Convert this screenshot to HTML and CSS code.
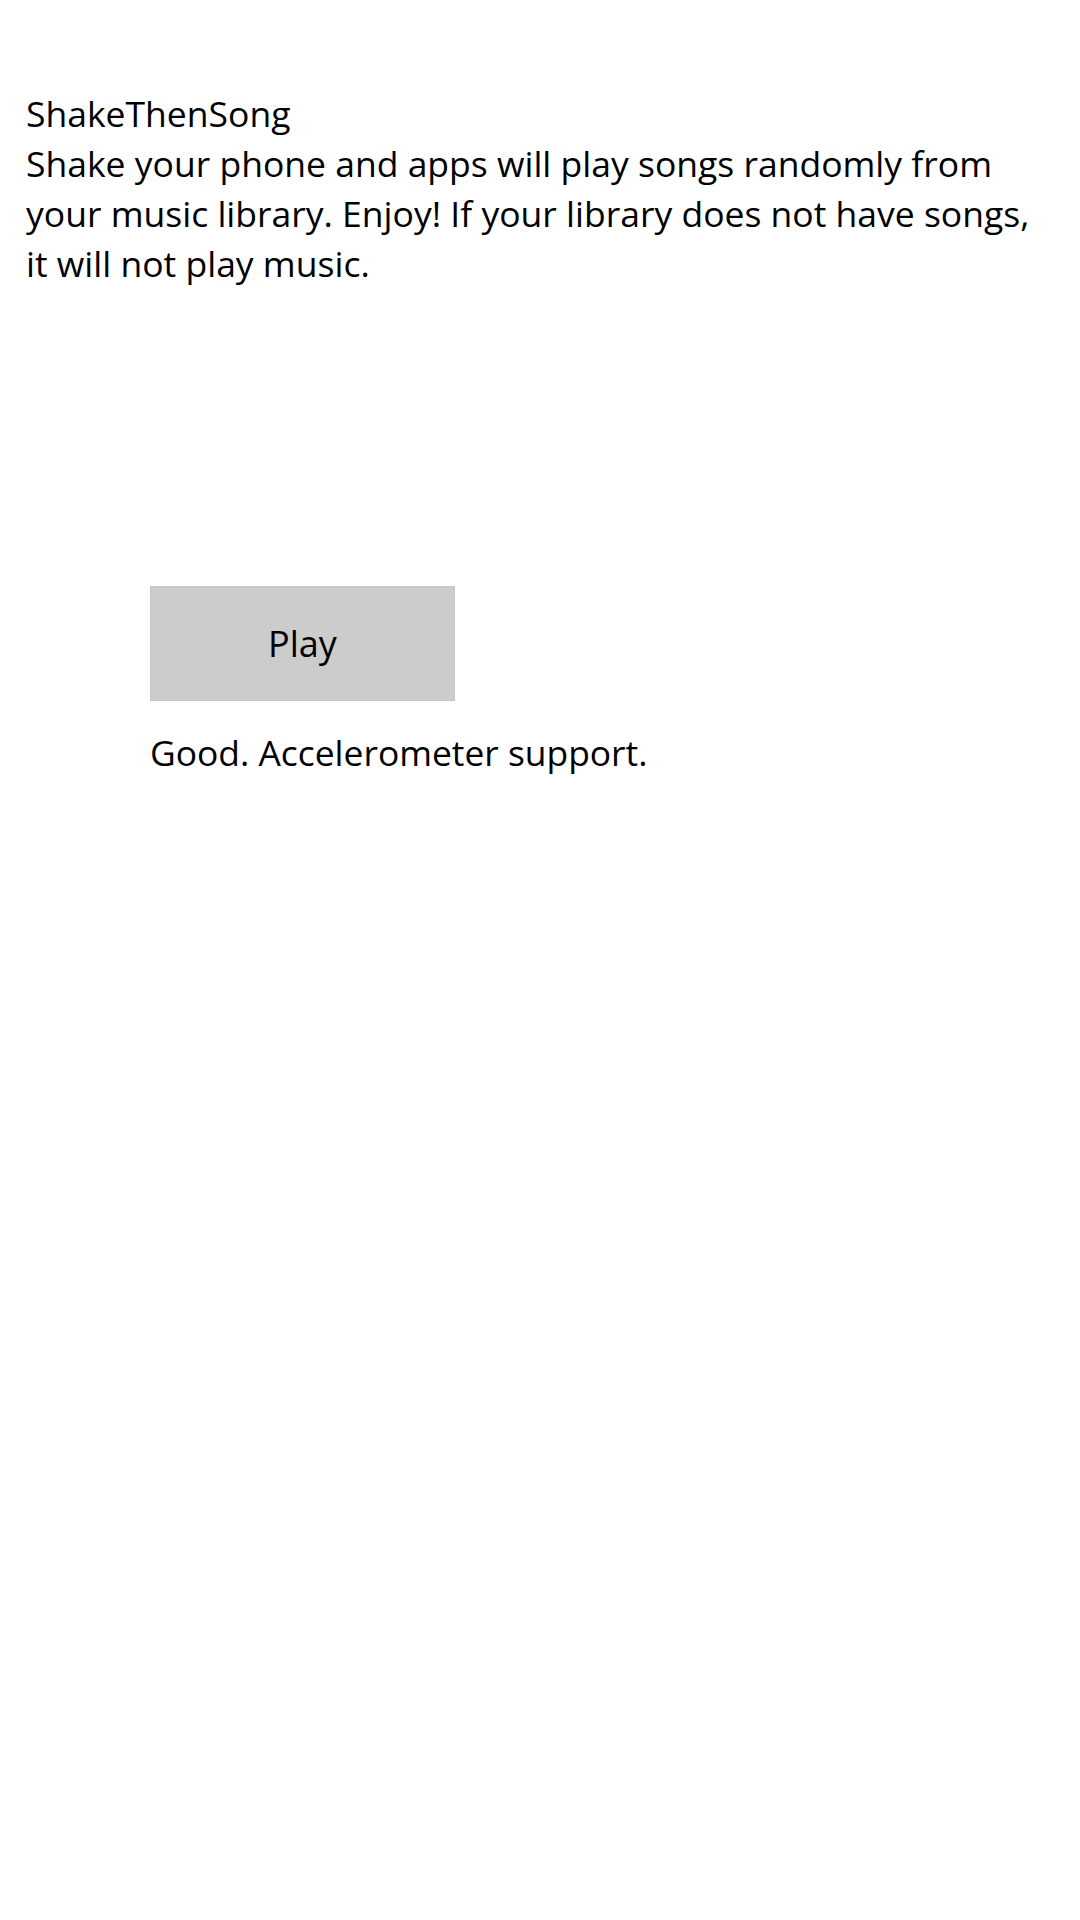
FILE: index.html
```html
<!DOCTYPE html>
<html lang="en">
<head>
<meta charset="utf-8">
<title>ShakeThenSong</title>
<link rel="stylesheet" href="styles.css">
</head>
<body>
<main class="page">
  <header class="intro">
    <div class="title">ShakeThenSong</div>
    <p class="desc">Shake your phone and apps will play songs randomly from your music library. Enjoy! If your library does not have songs, it will not play music.</p>
  </header>
  <section class="controls">
    <button class="play-btn" type="button">Play</button>
    <div class="status">Good. Accelerometer support.</div>
  </section>
</main>
</body>
</html>
```
FILE: styles.css
```css
html, body {
  margin: 0;
  padding: 0;
  background: #ffffff;
}
body {
  width: 1080px;
  height: 1920px;
  font-family: "Open Sans", "Noto Sans", sans-serif;
  color: #000000;
}
.page {
  padding: 88px 0 0 26px;
}
.intro {
  width: 1012px;
}
.title {
  font-size: 35.5px;
  line-height: 50px;
}
.desc {
  margin: 0;
  font-size: 35.5px;
  line-height: 50px;
}
.controls {
  margin: 298px 0 0 124px;
  display: flex;
  flex-direction: column;
  align-items: flex-start;
}
.play-btn {
  width: 305px;
  height: 115px;
  background: #cccccc;
  border: 1px solid #c6c6c6;
  font-family: inherit;
  font-size: 36px;
  color: #000000;
  padding: 0;
}
.status {
  margin-top: 27px;
  font-size: 35.4px;
  line-height: 48px;
  padding-left: 0;
}
```
